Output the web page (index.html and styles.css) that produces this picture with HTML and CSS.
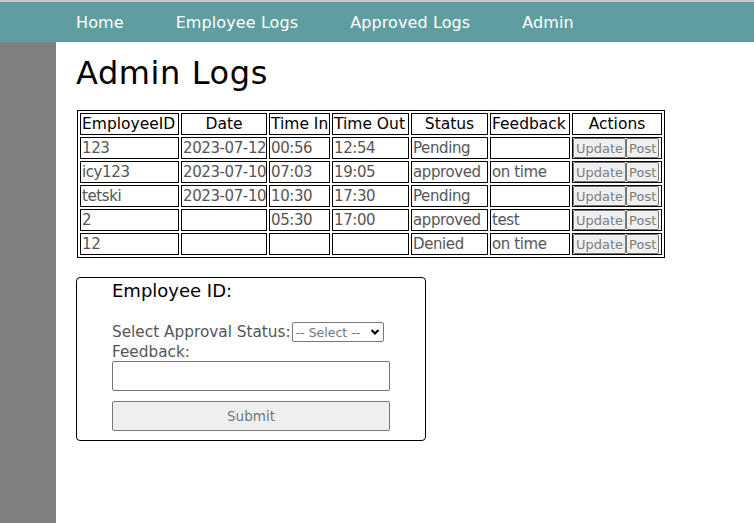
FILE: index.html
```html
<!DOCTYPE html>
<html>
<head>
<meta charset="utf-8">
<title>Admin Logs</title>
<link rel="stylesheet" href="styles.css">
</head>
<body>
<nav class="topnav">
  <a href="#">Home</a>
  <a href="#">Employee Logs</a>
  <a href="#">Approved Logs</a>
  <a href="#">Admin</a>
</nav>
<div class="page">
  <aside class="sidebar"></aside>
  <main class="main">
    <h1 class="title">Admin Logs</h1>
    <table class="logs">
      <colgroup>
        <col class="c1"><col class="c2"><col class="c3"><col class="c4"><col class="c5"><col class="c6"><col class="c7">
      </colgroup>
      <thead>
        <tr><th class="left">EmployeeID</th><th>Date</th><th class="left">Time In</th><th class="left">Time Out</th><th>Status</th><th class="left">Feedback</th><th>Actions</th></tr>
      </thead>
      <tbody>
        <tr><td>123</td><td>2023-07-12</td><td>00:56</td><td>12:54</td><td>Pending</td><td></td><td class="acts"><button class="btn">Update</button><button class="btn">Post</button></td></tr>
        <tr><td>icy123</td><td>2023-07-10</td><td>07:03</td><td>19:05</td><td>approved</td><td>on time</td><td class="acts"><button class="btn">Update</button><button class="btn">Post</button></td></tr>
        <tr><td>tetski</td><td>2023-07-10</td><td>10:30</td><td>17:30</td><td>Pending</td><td></td><td class="acts"><button class="btn">Update</button><button class="btn">Post</button></td></tr>
        <tr><td>2</td><td></td><td>05:30</td><td>17:00</td><td>approved</td><td>test</td><td class="acts"><button class="btn">Update</button><button class="btn">Post</button></td></tr>
        <tr><td>12</td><td></td><td></td><td></td><td>Denied</td><td>on time</td><td class="acts"><button class="btn">Update</button><button class="btn">Post</button></td></tr>
      </tbody>
    </table>
    <form class="card">
      <div class="emp">Employee ID:</div>
      <div class="row">
        <label class="lbl">Select Approval Status:</label>
        <span class="selwrap">
          <select class="sel"><option>-- Select --</option></select>
          <svg class="chev" width="10" height="8" viewBox="0 0 10 8"><path d="M1.5 2 L5 5.5 L8.5 2" fill="none" stroke="#000" stroke-width="2.2"/></svg>
        </span>
      </div>
      <label class="lbl block">Feedback:</label>
      <input class="field" type="text">
      <button class="submit" type="button">Submit</button>
    </form>
  </main>
</div>
</body>
</html>
```

FILE: styles.css
```css
html, body {
  margin: 0;
  padding: 0;
  height: 100%;
}
body {
  font-family: "DejaVu Sans", "Liberation Sans", sans-serif;
  background: #fff;
  color: #000;
  display: flex;
  flex-direction: column;
}
.topnav {
  border-top: 2px solid #c8c8c8;
  background: #5f9ea0;
  height: 40px;
  display: flex;
  align-items: center;
  gap: 52px;
  padding-left: 76px;
  box-sizing: content-box;
}
.topnav a {
  color: #fff;
  text-decoration: none;
  font-size: 16px;
  letter-spacing: 0.1px;
}
.page {
  flex: 1;
  display: flex;
}
.sidebar {
  width: 56px;
  background: #808080;
}
.main {
  flex: 1;
  padding-left: 20px;
}
.title {
  margin: 11px 0 17px;
  font-size: 32px;
  font-weight: normal;
  line-height: 40px;
  letter-spacing: 0.6px;
}
.logs {
  border: 1px solid #000;
  border-spacing: 2px;
  table-layout: fixed;
  width: 588px;
  margin-left: 1px;
  font-size: 15.5px;
}
.c1 { width: 99px; }
.c2 { width: 86px; }
.c3 { width: 61px; }
.c4 { width: 77px; }
.c5 { width: 77px; }
.c6 { width: 80px; }
.c7 { width: 90px; }
.logs th, .logs td {
  border: 1px solid #000;
  padding: 0 1px;
  height: 20px;
  line-height: 20px;
  white-space: nowrap;
  overflow: hidden;
}
.logs th {
  font-weight: normal;
  color: #000;
  text-align: center;
}
.logs th.left { text-align: left; }
.logs td {
  color: #555;
  text-align: left;
  font-size: 15px;
  letter-spacing: -0.4px;
}
.logs td.acts {
  padding: 0;
  text-align: left;
  letter-spacing: 0;
}
.btn {
  font-family: "DejaVu Sans", sans-serif;
  font-size: 13px;
  color: #808080;
  background: #efefef;
  border: 1px solid #767676;
  border-radius: 2px;
  padding: 0 2px;
  margin: 0;
  height: 20px;
  line-height: 17px;
  vertical-align: top;
}
.card {
  margin-top: 19px;
  width: 350px;
  box-sizing: border-box;
  border: 1px solid #000;
  border-radius: 4px;
  padding: 2px 35px 9px 35px;
}
.emp {
  font-size: 18px;
  line-height: 22px;
  color: #000;
}
.row {
  margin-top: 20px;
  display: flex;
  align-items: center;
  height: 20px;
}
.lbl {
  font-size: 15.3px;
  color: #555;
  line-height: 20px;
}
.lbl.block {
  display: block;
}
.selwrap {
  position: relative;
  display: inline-flex;
  margin-left: 1px;
}
.sel {
  -webkit-appearance: none;
  appearance: none;
  font-family: "DejaVu Sans", sans-serif;
  font-size: 12.5px;
  color: #777;
  width: 92px;
  height: 20px;
  border: 1px solid #767676;
  border-radius: 2px;
  background: #fff;
  padding: 0 0 0 3px;
  margin: 0;
}
.chev {
  position: absolute;
  right: 4px;
  top: 6px;
  pointer-events: none;
}
.field {
  display: block;
  box-sizing: border-box;
  width: 278px;
  height: 30px;
  border: 1px solid #767676;
  border-radius: 2px;
  margin: -1px 0 0;
}
.submit {
  display: block;
  box-sizing: border-box;
  width: 278px;
  height: 30px;
  margin-top: 10px;
  background: #efefef;
  border: 1px solid #767676;
  border-radius: 2px;
  font-family: "DejaVu Sans", sans-serif;
  font-size: 13.5px;
  color: #777;
}
```
